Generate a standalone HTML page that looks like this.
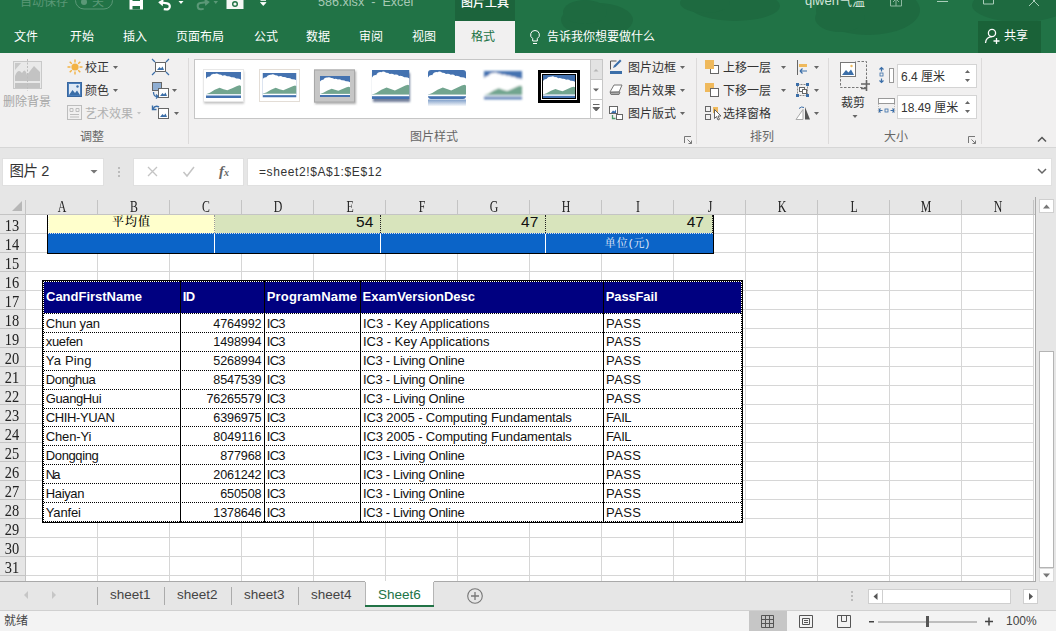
<!DOCTYPE html>
<html lang="zh-CN">
<head>
<meta charset="utf-8">
<title>586.xlsx - Excel</title>
<style>
*{box-sizing:border-box;margin:0;padding:0}
html,body{width:1056px;height:631px;overflow:hidden;background:#fff}
body{position:relative;font-family:"Liberation Sans","Noto Sans CJK SC",sans-serif;font-size:12px;color:#444}
.abs{position:absolute}
#title{left:0;top:0;width:1056px;height:53px;background:#217346}
.tt{position:absolute;color:#fff;white-space:nowrap}
.tab{position:absolute;top:28.5px;font-size:12px;color:#fff;white-space:nowrap;line-height:16px}
#ribbon{left:0;top:53px;width:1056px;height:95px;background:#f1f0f0;border-bottom:1px solid #d6d6d6}
.rl{position:absolute;font-size:12px;color:#333;white-space:nowrap;line-height:14px}
.gl{position:absolute;font-size:12px;color:#666;white-space:nowrap;line-height:14px}
.sep{position:absolute;top:58px;width:1px;height:84px;background:#dcdcdc}
#fbar{left:0;top:148px;width:1056px;height:49px;background:#e6e6e6}
.box{position:absolute;background:#fff;border:1px solid #e0e0e0}
#grid{left:0;top:197px;width:1036px;height:385px;background:#fff;overflow:hidden;border-right:1px solid #a9a9a9;border-bottom:1px solid #a9a9a9}
#colhdr{left:0;top:0;width:1040px;height:18px;background:#e6e6e6;border-bottom:1px solid #c4c4c4}
.ch{position:absolute;top:1px;font-family:"Liberation Serif","Noto Serif CJK SC",serif;font-size:16px;line-height:17px;color:#222;width:72px;text-align:center;transform:scaleX(0.74)}
.rh{position:absolute;left:0;width:26px;height:19px;background:#e6e6e6;border-bottom:1px solid #c4c4c4;border-right:1px solid #c4c4c4;font-family:"Liberation Serif","Noto Serif CJK SC",serif;font-size:16px;line-height:21px;color:#222;text-align:center}
.rh span{display:inline-block;transform:scaleX(0.9);margin-left:-1px}
#tabs{left:0;top:582px;width:1056px;height:28px;background:#e6e6e6}
#status{left:0;top:610px;width:1056px;height:21px;background:#f3f3f3;border-top:1px solid #d0d0d0}
.td{font-size:13px;line-height:16px;color:#111;white-space:nowrap}
.tn{font-size:12.600px}
.th{font-weight:bold;font-size:13px;line-height:16px;color:#fff;white-space:nowrap}
.p1n{top:-2.300px;text-align:right;font-size:15.500px;color:#111;line-height:18px;font-family:"Liberation Sans",sans-serif}
.st{top:3.500px;font-size:13.500px;line-height:18px;color:#444;white-space:nowrap}
</style>
</head>
<body>
<div id="title" class="abs">
<svg class="abs" style="left:0;top:0" width="1056" height="53" viewBox="0 0 1056 53">
<g fill="#1e6a40">
<ellipse cx="597" cy="20" rx="36" ry="17"/><ellipse cx="585" cy="12" rx="22" ry="12"/>
<ellipse cx="735" cy="6" rx="45" ry="15"/><ellipse cx="705" cy="3" rx="25" ry="10"/>
<ellipse cx="868" cy="10" rx="52" ry="25"/><ellipse cx="840" cy="18" rx="25" ry="14"/>
<ellipse cx="1020" cy="5" rx="48" ry="17"/>
</g>
<rect x="455" y="0" width="60" height="22" fill="#1c643c"/>
<rect x="455" y="21" width="60" height="32" fill="#f1f0f0"/>
<rect x="978" y="21" width="63" height="32" fill="#1a6238"/>
<!-- autosave toggle -->
<rect x="75.500" y="-8" width="37" height="17" rx="8.500" fill="none" stroke="#5b9877" stroke-width="1"/>
<circle cx="84" cy="2" r="3" fill="#5b9877"/>
<!-- save -->
<rect x="129.500" y="-5" width="13.500" height="14.500" fill="#fff"/>
<rect x="132.500" y="6" width="7.500" height="3.500" fill="#217346"/>
<rect x="132.500" y="-5" width="7.500" height="6" fill="#217346"/><rect x="133.500" y="-5" width="5.500" height="5" fill="#fff"/>
<!-- undo -->
<path d="M159.500 3 h7.500 a3 3 0 0 1 0 6.200 h-2.500" fill="none" stroke="#fff" stroke-width="2.200" transform="rotate(8 165 4)"/>
<path d="M158 3.200 l5 -4.200 v7.500z" fill="#fff" transform="rotate(8 165 4)"/>
<path d="M178.500 1h5l-2.500 3z" fill="#fff"/>
<!-- redo faint -->
<path d="M208 3 h-7.500 a3 3 0 0 0 0 6.200 h2.500" fill="none" stroke="#5b9877" stroke-width="2" transform="rotate(-8 201 4)"/>
<path d="M210 3.200 l-5 -4.200 v7.500z" fill="#5b9877" transform="rotate(-8 201 4)"/>
<path d="M213.500 1h4.500l-2.250 3z" fill="#5b9877"/>
<!-- camera -->
<rect x="226.500" y="-6" width="17" height="15" fill="#f4f8f5"/>
<circle cx="235" cy="4" r="3" fill="#217346"/><circle cx="235" cy="4" r="1.600" fill="#f4f8f5"/>
<path d="M260.500 0.500h5.500 M260.500 2.500h5.500l-2.750 3z" fill="#fff" stroke="#fff" stroke-width="0.800"/>
<!-- window controls -->
<path d="M890.500 -4h11v10h-11z M896 6v-7 M893 2l3-3l3 3" fill="none" stroke="#8db8a0" stroke-width="1"/>
<path d="M937 1.500h11" stroke="#a9cdb9" stroke-width="1"/>
<path d="M983.500 -6h10v10h-10z" fill="none" stroke="#a9cdb9" stroke-width="1"/>
<path d="M1029 -4l10 10 M1039 -4l-10 10" stroke="#a9cdb9" stroke-width="1"/>
<!-- bulb -->
<path d="M535 30.500a4.300 4.300 0 0 1 2.300 8 v2.500h-4.600v-2.500a4.300 4.300 0 0 1 2.300 -8z M533 43.500h4" fill="none" stroke="#fff" stroke-width="1"/>
<!-- share person -->
<circle cx="992" cy="33" r="3.600" fill="none" stroke="#fff" stroke-width="1.300"/>
<path d="M985.500 43q0.500 -6 6.500 -6.300 M996.500 38v6 M993.500 41h6" fill="none" stroke="#fff" stroke-width="1.300"/>
</svg>
<div class="tt" style="left:20px;top:-6px;font-size:12px;line-height:16px;color:#5b9877">自动保存</div>
<div class="tt" style="left:92px;top:-6px;font-size:12px;line-height:16px;color:#5b9877">关</div>
<div class="tt" style="left:318px;top:-6.500px;font-size:12.600px;line-height:16px;color:#a7c9b5">586.xlsx&nbsp; -&nbsp; Excel</div>
<div class="tt" style="left:461px;top:-5px;font-size:12px;font-weight:500;line-height:16px;color:#fff">图片工具</div>
<div class="tt" style="left:805px;top:-7px;font-size:13px;line-height:16px;color:#cfe3d7">qiwen气温</div>
<div class="tab" style="left:14px">文件</div>
<div class="tab" style="left:70px">开始</div>
<div class="tab" style="left:123px">插入</div>
<div class="tab" style="left:176px">页面布局</div>
<div class="tab" style="left:254px">公式</div>
<div class="tab" style="left:306px">数据</div>
<div class="tab" style="left:359px">审阅</div>
<div class="tab" style="left:412px">视图</div>
<div class="tab" style="left:471px;color:#217346">格式</div>
<div class="tab" style="left:547px">告诉我你想要做什么</div>
<div class="tab" style="left:1004px;top:27.500px">共享</div>
</div>
<div id="ribbon" class="abs">
<svg class="abs" style="left:0;top:0" width="1056" height="95" viewBox="0 53 1056 95">
<defs>
<filter id="sh" x="-20%" y="-20%" width="140%" height="150%"><feGaussianBlur stdDeviation="1"/></filter>
<filter id="soft" x="-10%" y="-10%" width="120%" height="120%"><feGaussianBlur stdDeviation="0.800"/></filter>
<linearGradient id="refl" x1="0" y1="0" x2="0" y2="1"><stop offset="0" stop-color="#4472b0" stop-opacity="0.700"/><stop offset="1" stop-color="#4472b0" stop-opacity="0"/></linearGradient>
</defs>
<!-- separators -->
<g fill="#dcdada"><rect x="188" y="58" width="1" height="86"/><rect x="696" y="58" width="1" height="86"/><rect x="828" y="58" width="1" height="86"/><rect x="981" y="58" width="1" height="86"/></g>
<!-- gallery -->
<rect x="194.500" y="59.500" width="408" height="59" fill="#fff" stroke="#c6c6c6"/>
<rect x="590" y="60" width="12" height="20" fill="#e3e3e3"/>
<path d="M590.500 60v58 M590 79.500h12 M590 99.500h12" stroke="#c6c6c6" fill="none"/>
<path d="M593.500 71.500l2.500-2.500l2.500 2.500z" fill="#b5b5b5"/>
<path d="M593 88.500h6l-3 3z" fill="#666"/>
<path d="M593 104.500h6.500 M593 107.500h6.500l-3.250 3.500z" fill="#666" stroke="#666" stroke-width="1"/>
<!--TH--><rect x="204" y="71.500" width="40" height="32" fill="#888" opacity="0.550" filter="url(#sh)"/><rect x="203.500" y="69.500" width="40" height="32" fill="#fff" stroke="#e8e8e8"/><svg x="206" y="72" width="35" height="26" viewBox="0 0 36 27" preserveAspectRatio="none"><rect width="36" height="27" fill="#4472b0"/><path d="M0 7 Q1.500 4.500 4 4.800 Q5.500 1.500 9 2 Q11 0.800 13.500 2.500 Q15.500 2.300 17 3.800 Q19.500 2.800 21.500 4.500 Q24 3.800 26 5.500 Q29 5 31 6.800 Q34 6.500 36 8 V23 H0z" fill="#fff"/><path d="M0 23 L4 21.500 L9 18.500 L14 16.300 L18 17.800 L22 19 L27 16.800 L32 14.500 L34.500 13.800 L36 14.500 V23z" fill="#72a58f"/><rect y="23" width="36" height="1.400" fill="#fff"/></svg><rect x="259.500" y="69.500" width="40" height="32" fill="#fff" stroke="#e3ddd6"/><svg x="262.5" y="73" width="34" height="24.5" viewBox="0 0 36 27" preserveAspectRatio="none"><rect width="36" height="27" fill="#4472b0"/><path d="M0 7 Q1.500 4.500 4 4.800 Q5.500 1.500 9 2 Q11 0.800 13.500 2.500 Q15.500 2.300 17 3.800 Q19.500 2.800 21.500 4.500 Q24 3.800 26 5.500 Q29 5 31 6.800 Q34 6.500 36 8 V23 H0z" fill="#fff"/><path d="M0 23 L4 21.500 L9 18.500 L14 16.300 L18 17.800 L22 19 L27 16.800 L32 14.500 L34.500 13.800 L36 14.500 V23z" fill="#72a58f"/><rect y="23" width="36" height="1.400" fill="#fff"/></svg><rect x="315" y="71" width="41" height="33" fill="#777" opacity="0.600" filter="url(#sh)"/><rect x="314" y="69.500" width="41" height="33" fill="#c6c6c6"/><rect x="314.500" y="70" width="40" height="32" fill="none" stroke="#a8a8a8"/><svg x="320" y="76" width="30" height="21" viewBox="0 0 36 27" preserveAspectRatio="none"><rect width="36" height="27" fill="#4472b0"/><path d="M0 7 Q1.500 4.500 4 4.800 Q5.500 1.500 9 2 Q11 0.800 13.500 2.500 Q15.500 2.300 17 3.800 Q19.500 2.800 21.500 4.500 Q24 3.800 26 5.500 Q29 5 31 6.800 Q34 6.500 36 8 V23 H0z" fill="#fff"/><path d="M0 23 L4 21.500 L9 18.500 L14 16.300 L18 17.800 L22 19 L27 16.800 L32 14.500 L34.500 13.800 L36 14.500 V23z" fill="#72a58f"/><rect y="23" width="36" height="1.400" fill="#fff"/></svg><rect x="373" y="73" width="37" height="29" fill="#44557a" opacity="0.750" filter="url(#sh)"/><svg x="372" y="70" width="37.5" height="29" viewBox="0 0 36 27" preserveAspectRatio="none"><rect width="36" height="27" fill="#4472b0"/><path d="M0 7 Q1.500 4.500 4 4.800 Q5.500 1.500 9 2 Q11 0.800 13.500 2.500 Q15.500 2.300 17 3.800 Q19.500 2.800 21.500 4.500 Q24 3.800 26 5.500 Q29 5 31 6.800 Q34 6.500 36 8 V23 H0z" fill="#fff"/><path d="M0 23 L4 21.500 L9 18.500 L14 16.300 L18 17.800 L22 19 L27 16.800 L32 14.500 L34.500 13.800 L36 14.500 V23z" fill="#72a58f"/><rect y="23" width="36" height="1.400" fill="#fff"/></svg><rect x="428" y="99.500" width="38" height="7" fill="url(#refl)"/><clipPath id="rc"><rect x="428" y="70" width="38" height="29" rx="3"/></clipPath><g clip-path="url(#rc)"><svg x="428" y="70" width="38" height="29" viewBox="0 0 36 27" preserveAspectRatio="none"><rect width="36" height="27" fill="#4472b0"/><path d="M0 7 Q1.500 4.500 4 4.800 Q5.500 1.500 9 2 Q11 0.800 13.500 2.500 Q15.500 2.300 17 3.800 Q19.500 2.800 21.500 4.500 Q24 3.800 26 5.500 Q29 5 31 6.800 Q34 6.500 36 8 V23 H0z" fill="#fff"/><path d="M0 23 L4 21.500 L9 18.500 L14 16.300 L18 17.800 L22 19 L27 16.800 L32 14.500 L34.500 13.800 L36 14.500 V23z" fill="#72a58f"/><rect y="23" width="36" height="1.400" fill="#fff"/></svg></g><g filter="url(#soft)"><svg x="484" y="71" width="38" height="28.5" viewBox="0 0 36 27" preserveAspectRatio="none"><rect width="36" height="27" fill="#4472b0"/><path d="M0 7 Q1.500 4.500 4 4.800 Q5.500 1.500 9 2 Q11 0.800 13.500 2.500 Q15.500 2.300 17 3.800 Q19.500 2.800 21.500 4.500 Q24 3.800 26 5.500 Q29 5 31 6.800 Q34 6.500 36 8 V23 H0z" fill="#fff"/><path d="M0 23 L4 21.500 L9 18.500 L14 16.300 L18 17.800 L22 19 L27 16.800 L32 14.500 L34.500 13.800 L36 14.500 V23z" fill="#72a58f"/><rect y="23" width="36" height="1.400" fill="#fff"/></svg></g><rect x="538" y="70" width="42" height="33" fill="#000"/><rect x="541.500" y="73.500" width="35" height="26" fill="none" stroke="#fff"/><svg x="543" y="75" width="32" height="23" viewBox="0 0 36 27" preserveAspectRatio="none"><rect width="36" height="27" fill="#4472b0"/><path d="M0 7 Q1.500 4.500 4 4.800 Q5.500 1.500 9 2 Q11 0.800 13.500 2.500 Q15.500 2.300 17 3.800 Q19.500 2.800 21.500 4.500 Q24 3.800 26 5.500 Q29 5 31 6.800 Q34 6.500 36 8 V23 H0z" fill="#fff"/><path d="M0 23 L4 21.500 L9 18.500 L14 16.300 L18 17.800 L22 19 L27 16.800 L32 14.500 L34.500 13.800 L36 14.500 V23z" fill="#72a58f"/><rect y="23" width="36" height="1.400" fill="#fff"/></svg><!--/TH-->
<!-- group 1 icons -->
<g id="rmbg"><rect x="13.500" y="61.500" width="28" height="27" fill="#e9e9e9" stroke="#c9c9c9"/><path d="M15 76 q3 -8 7 -3 q3 -6 5 2 l3 -4 l4 -5 l6 6 V81 H15z" fill="#c3c3c3"/><rect x="15" y="83" width="25" height="5" fill="#c3c3c3"/><path d="M27.500 59v32" stroke="#bdbdbd" stroke-dasharray="2 1.500"/><path d="M15 63h6l-6 7z" fill="#c9c9c9"/></g>
<g id="sun"><circle cx="75" cy="67" r="3.600" fill="#f3b344"/><g stroke="#f3b344" stroke-width="1.400"><path d="M75 59.500v3 M75 71.500v3 M67.500 67h3 M79.500 67h3 M69.700 61.700l2.100 2.100 M78.200 70.200l2.100 2.100 M69.700 72.300l2.100-2.100 M78.200 63.800l2.100-2.100"/></g></g>
<g id="color"><rect x="67.500" y="82.500" width="14" height="14" fill="#4a7ebb" stroke="#39679f"/><rect x="69" y="84" width="11" height="11" fill="#dfe9f5"/><path d="M69 95l3.500-5l2.500 3l2-2.500l3 4.500z" fill="#3b6ea8"/><circle cx="77.500" cy="86.500" r="1.200" fill="#3b6ea8"/></g>
<g id="art" fill="none" stroke="#bdbdbd"><rect x="67.500" y="105.500" width="14" height="14"/><path d="M70 108.500h3v3h-3z M76 108.500h3v3h-3z M70 114.500h9 M70 117h9" /></g>
<g id="compress"><rect x="155.500" y="62.500" width="10" height="9" fill="#fff" stroke="#666"/><path d="M157 70l2.500-3l1.500 1.500l1.500-2l1.500 3.500z" fill="#3b6ea8"/><g stroke="#3b6ea8" stroke-width="1.200" fill="none"><path d="M152 59l3 3 M169 59l-3 3 M152 75l3-3 M169 75l-3-3"/></g></g>
<g id="change"><rect x="152.500" y="82.500" width="9" height="8" fill="#8faed3" stroke="#666"/><rect x="158.500" y="88.500" width="10" height="9" fill="#fff" stroke="#666"/><path d="M160 96l2.500-3l1.500 1.500l1.500-2l1.500 3.500z" fill="#3b6ea8"/><path d="M153.500 92q0 5 4 4.500 M156 94.500l2 2l-2 2" fill="none" stroke="#3b6ea8" stroke-width="1.300"/><path d="M172 89h5l-2.500 3z" fill="#666"/></g>
<g id="reset"><rect x="158.500" y="108.500" width="10" height="10" fill="#fff" stroke="#666"/><path d="M160 117l2.500-3l1.500 1.500l1.500-2l1.500 3.500z" fill="#3b6ea8"/><path d="M153 109q2 -4 6 -2 M152.500 105.500v4h4" fill="none" stroke="#3b6ea8" stroke-width="1.400"/><path d="M174 112h5l-2.500 3z" fill="#666"/></g>
<g fill="#666"><path d="M113 66h5l-2.500 3z"/><path d="M113 89h5l-2.500 3z"/></g><path d="M137 112h4l-2 2.500z" fill="#c3c3c3"/>
<!-- group 3 icons -->
<g id="pborder"><path d="M610.500 69.500v-8.500h6" fill="none" stroke="#555"/><rect x="610" y="71" width="12" height="3" fill="#3b6ea8"/><path d="M613 68l1-2.500l6-6l1.500 1.500l-6 6z" fill="#3b6ea8"/></g>
<g id="peffect"><path d="M610 92l4-7h8l-3 7z" fill="#fff" stroke="#777" stroke-linejoin="round"/><path d="M610 92.500l1 2h8l1-2.500z" fill="#aaa" stroke="#777" stroke-linejoin="round"/></g>
<g id="playout"><rect x="609.500" y="106.500" width="8" height="7" fill="#fff" stroke="#666"/><path d="M611 113l2-2.500l1.500 1l1.500-2v3.500z" fill="#3b6ea8"/><rect x="616.500" y="114.500" width="6" height="5" fill="#fff" stroke="#666"/><path d="M612.500 115v3.500h3" fill="none" stroke="#4c9a6a" stroke-width="1.300"/></g>
<g fill="#666"><path d="M680 66h5l-2.500 3z"/><path d="M680 89h5l-2.500 3z"/><path d="M680 112h5l-2.500 3z"/></g>
<g id="dlg1" fill="none" stroke="#777"><path d="M684.500 143v-6.500h6.500"/><path d="M687.500 139.500l4 4 M691.500 140.500v3h-3" /></g>
<!-- group 4 icons -->
<g id="fwd"><rect x="710.500" y="65.500" width="8" height="8" fill="#fff" stroke="#666"/><rect x="705" y="60" width="9" height="9" fill="#efb95c"/></g>
<g id="bwd"><rect x="705" y="83" width="9" height="9" fill="#efb95c"/><rect x="710.500" y="88.500" width="8" height="8" fill="#fff" stroke="#666"/></g>
<g id="selpane"><g fill="none" stroke="#666"><rect x="705.500" y="106.500" width="5" height="5"/><rect x="705.500" y="114.500" width="5" height="5"/></g><rect x="713" y="107" width="5" height="6" fill="#efb95c"/><path d="M714.500 109.500v9l2-2l1.500 3.500l1.500-0.700l-1.500-3.300h3z" fill="#fff" stroke="#555" stroke-width="0.900"/></g>
<g fill="#666"><path d="M781 66h5l-2.500 3z"/><path d="M781 89h5l-2.500 3z"/></g>
<g id="align"><path d="M797.500 60v15" stroke="#666"/><rect x="799" y="64" width="8" height="3" fill="#efb95c"/><path d="M800 71h7 M800 71l2.500-2.500 M800 71l2.500 2.500" stroke="#3b6ea8" stroke-width="1.200" fill="none"/></g>
<g id="group"><rect x="797.500" y="84.500" width="10" height="11" fill="none" stroke="#888" stroke-dasharray="2 1"/><rect x="799.500" y="87.500" width="5" height="4" fill="#fff" stroke="#666"/><rect x="802.500" y="89.500" width="4" height="4" fill="#fff" stroke="#666"/><g fill="#3b6ea8"><rect x="796" y="83" width="3" height="3"/><rect x="806" y="83" width="3" height="3"/><rect x="796" y="94" width="3" height="3"/><rect x="806" y="94" width="3" height="3"/></g></g>
<g id="rotate"><path d="M796 119.500l7-10v10z" fill="#fff" stroke="#aaa"/><path d="M805 107v12.500h5z" fill="#555"/><path d="M799 108.500q2.500-2.500 5-1" fill="none" stroke="#3b6ea8"/></g>
<g fill="#666"><path d="M814 66h5l-2.500 3z"/><path d="M814 89h5l-2.500 3z"/><path d="M814 112h5l-2.500 3z"/></g>
<!-- group 5 -->
<g id="crop"><path d="M840.500 75v12.500h25.500 M866.500 87v-25.500h-11" fill="none" stroke="#777" stroke-dasharray="2.500 1.500"/><rect x="840.500" y="62.500" width="15" height="14" fill="#fff" stroke="#777"/><path d="M842 75l4-5l2.500 2.500l2.500-3l3 5.500z" fill="#3b6ea8"/><circle cx="851.500" cy="66" r="1.200" fill="#efb95c"/><path d="M861 84h9 M866.500 80v11 M861 88.500h6" stroke="#666" stroke-width="1.600" fill="none"/></g>
<path d="M852.500 115h5l-2.500 3z" fill="#666"/>
<g id="hicon"><rect x="889.500" y="68.500" width="4" height="14" fill="#fff" stroke="#999"/><g stroke="#3b6ea8" stroke-width="1.200" fill="none"><path d="M881.500 67.500v4 M879.500 69.500l2-2l2 2 M881.500 82.500v-4 M879.500 80.500l2 2l2-2"/></g><rect x="880" y="73" width="3" height="3" fill="none" stroke="#3b6ea8" stroke-width="0.800"/></g>
<g id="wicon"><rect x="878.500" y="98.500" width="16" height="5" fill="#fff" stroke="#999"/><g stroke="#3b6ea8" stroke-width="1.200" fill="none"><path d="M878.500 110.500h4 M880.500 108.500l-2 2l2 2 M894.500 110.500h-4 M892.500 108.500l2 2l-2 2"/></g><rect x="885" y="109" width="3" height="3" fill="none" stroke="#3b6ea8" stroke-width="0.800"/><path d="M878.500 104v9 M894.500 104v9" stroke="#bbb" stroke-dasharray="1 1"/></g>
<rect x="897.500" y="64.500" width="79" height="23" fill="#fff" stroke="#d4d4d4"/>
<rect x="897.500" y="95.500" width="79" height="23" fill="#fff" stroke="#d4d4d4"/>
<g fill="#666"><path d="M965 73h5l-2.500-3z"/><path d="M965 79h5l-2.500 3z"/><path d="M965 104h5l-2.500-3z"/><path d="M965 110h5l-2.500 3z"/></g>
<g id="dlg2" fill="none" stroke="#777"><path d="M968.500 143v-6.500h6.500"/><path d="M971.500 139.500l4 4 M975.500 140.500v3h-3"/></g>
<path d="M1038 141.500l4-4l4 4" fill="none" stroke="#555" stroke-width="1.500"/>
</svg>
<div class="gl" style="left:3px;top:41.500px;color:#a6a6a6">删除背景</div>
<div class="rl" style="left:85px;top:8px">校正</div>
<div class="rl" style="left:85px;top:31px">颜色</div>
<div class="rl" style="left:85px;top:54px;color:#b0b0b0">艺术效果</div>
<div class="gl" style="left:80px;top:77px">调整</div>
<div class="gl" style="left:410px;top:77px">图片样式</div>
<div class="rl" style="left:628px;top:8px">图片边框</div>
<div class="rl" style="left:628px;top:31px">图片效果</div>
<div class="rl" style="left:628px;top:54px">图片版式</div>
<div class="rl" style="left:723px;top:8px">上移一层</div>
<div class="rl" style="left:723px;top:31px">下移一层</div>
<div class="rl" style="left:723px;top:54px">选择窗格</div>
<div class="gl" style="left:750px;top:77px">排列</div>
<div class="rl" style="left:841px;top:43px">裁剪</div>
<div class="rl" style="left:901px;top:17px">6.4 厘米</div>
<div class="rl" style="left:901px;top:48px">18.49 厘米</div>
<div class="gl" style="left:884px;top:77px">大小</div>
</div>
<div id="fbar" class="abs">
<div class="box" style="left:2px;top:10px;width:102px;height:28px"></div>
<div class="box" style="left:133px;top:10px;width:111px;height:28px"></div>
<div class="box" style="left:247px;top:10px;width:805px;height:28px"></div>
<div id="nbox" class="abs" style="left:9.500px;top:13.500px;font-size:14.500px;line-height:18px;color:#333;white-space:nowrap;letter-spacing:-0.400px">图片 2</div>
<div id="ftxt" class="abs" style="left:259px;top:16px;font-size:12px;line-height:16px;color:#333;white-space:nowrap;letter-spacing:0.600px">=sheet2!$A$1:$E$12</div>
<svg class="abs" style="left:0;top:0" width="1056" height="49" viewBox="0 148 1056 49">
<path d="M90.500 170h7l-3.500 3.500z" fill="#777"/>
<g fill="#bbb"><rect x="118" y="167" width="2" height="2"/><rect x="118" y="171" width="2" height="2"/><rect x="118" y="175" width="2" height="2"/></g>
<path d="M148 167l9 9 M157 167l-9 9" stroke="#c4c4c4" stroke-width="1.300" fill="none"/>
<path d="M183.500 172l3.500 4l7-9" stroke="#c4c4c4" stroke-width="1.500" fill="none"/>
<path d="M1038 169l4 4l4-4" stroke="#666" stroke-width="1.500" fill="none"/>
</svg>
<div class="abs" style="left:219px;top:14px;font-family:'Liberation Serif',serif;font-style:italic;font-weight:bold;font-size:15px;line-height:18px;color:#666;white-space:nowrap">f<span style="font-size:10px">x</span></div>
</div>
<!--GRID-->
<div id="grid" class="abs">
<svg class="abs" style="left:0;top:0" width="1040" height="385"><rect x="25" y="18" width="1" height="368" fill="#d6d6d6"/><rect x="97" y="18" width="1" height="368" fill="#d6d6d6"/><rect x="169" y="18" width="1" height="368" fill="#d6d6d6"/><rect x="241" y="18" width="1" height="368" fill="#d6d6d6"/><rect x="313" y="18" width="1" height="368" fill="#d6d6d6"/><rect x="385" y="18" width="1" height="368" fill="#d6d6d6"/><rect x="457" y="18" width="1" height="368" fill="#d6d6d6"/><rect x="529" y="18" width="1" height="368" fill="#d6d6d6"/><rect x="601" y="18" width="1" height="368" fill="#d6d6d6"/><rect x="673" y="18" width="1" height="368" fill="#d6d6d6"/><rect x="745" y="18" width="1" height="368" fill="#d6d6d6"/><rect x="817" y="18" width="1" height="368" fill="#d6d6d6"/><rect x="889" y="18" width="1" height="368" fill="#d6d6d6"/><rect x="961" y="18" width="1" height="368" fill="#d6d6d6"/><rect x="1033" y="18" width="1" height="368" fill="#d6d6d6"/><rect x="26" y="36" width="1008" height="1" fill="#d6d6d6"/><rect x="26" y="55" width="1008" height="1" fill="#d6d6d6"/><rect x="26" y="74" width="1008" height="1" fill="#d6d6d6"/><rect x="26" y="93" width="1008" height="1" fill="#d6d6d6"/><rect x="26" y="112" width="1008" height="1" fill="#d6d6d6"/><rect x="26" y="131" width="1008" height="1" fill="#d6d6d6"/><rect x="26" y="150" width="1008" height="1" fill="#d6d6d6"/><rect x="26" y="169" width="1008" height="1" fill="#d6d6d6"/><rect x="26" y="188" width="1008" height="1" fill="#d6d6d6"/><rect x="26" y="207" width="1008" height="1" fill="#d6d6d6"/><rect x="26" y="226" width="1008" height="1" fill="#d6d6d6"/><rect x="26" y="245" width="1008" height="1" fill="#d6d6d6"/><rect x="26" y="264" width="1008" height="1" fill="#d6d6d6"/><rect x="26" y="283" width="1008" height="1" fill="#d6d6d6"/><rect x="26" y="302" width="1008" height="1" fill="#d6d6d6"/><rect x="26" y="321" width="1008" height="1" fill="#d6d6d6"/><rect x="26" y="340" width="1008" height="1" fill="#d6d6d6"/><rect x="26" y="359" width="1008" height="1" fill="#d6d6d6"/><rect x="26" y="378" width="1008" height="1" fill="#d6d6d6"/><rect x="26" y="397" width="1008" height="1" fill="#d6d6d6"/><rect x="26" y="416" width="1008" height="1" fill="#d6d6d6"/></svg>
<div id="colhdr" class="abs"><div class="ch" style="left:26px">A</div><div class="abs" style="left:97px;top:3px;width:1px;height:15px;background:#c4c4c4"></div><div class="ch" style="left:98px">B</div><div class="abs" style="left:169px;top:3px;width:1px;height:15px;background:#c4c4c4"></div><div class="ch" style="left:170px">C</div><div class="abs" style="left:241px;top:3px;width:1px;height:15px;background:#c4c4c4"></div><div class="ch" style="left:242px">D</div><div class="abs" style="left:313px;top:3px;width:1px;height:15px;background:#c4c4c4"></div><div class="ch" style="left:314px">E</div><div class="abs" style="left:385px;top:3px;width:1px;height:15px;background:#c4c4c4"></div><div class="ch" style="left:386px">F</div><div class="abs" style="left:457px;top:3px;width:1px;height:15px;background:#c4c4c4"></div><div class="ch" style="left:458px">G</div><div class="abs" style="left:529px;top:3px;width:1px;height:15px;background:#c4c4c4"></div><div class="ch" style="left:530px">H</div><div class="abs" style="left:601px;top:3px;width:1px;height:15px;background:#c4c4c4"></div><div class="ch" style="left:602px">I</div><div class="abs" style="left:673px;top:3px;width:1px;height:15px;background:#c4c4c4"></div><div class="ch" style="left:674px">J</div><div class="abs" style="left:745px;top:3px;width:1px;height:15px;background:#c4c4c4"></div><div class="ch" style="left:746px">K</div><div class="abs" style="left:817px;top:3px;width:1px;height:15px;background:#c4c4c4"></div><div class="ch" style="left:818px">L</div><div class="abs" style="left:889px;top:3px;width:1px;height:15px;background:#c4c4c4"></div><div class="ch" style="left:890px">M</div><div class="abs" style="left:961px;top:3px;width:1px;height:15px;background:#c4c4c4"></div><div class="ch" style="left:962px">N</div><div class="abs" style="left:1033px;top:3px;width:1px;height:15px;background:#c4c4c4"></div><div class="abs" style="left:25px;top:3px;width:1px;height:15px;background:#c4c4c4"></div><svg class="abs" style="left:11px;top:4px" width="12" height="11"><path d="M11 0V10H1z" fill="#b7b7b7"/></svg></div>
<div class="rh" style="top:18px"><span>13</span></div><div class="rh" style="top:37px"><span>14</span></div><div class="rh" style="top:56px"><span>15</span></div><div class="rh" style="top:75px"><span>16</span></div><div class="rh" style="top:94px"><span>17</span></div><div class="rh" style="top:113px"><span>18</span></div><div class="rh" style="top:132px"><span>19</span></div><div class="rh" style="top:151px"><span>20</span></div><div class="rh" style="top:170px"><span>21</span></div><div class="rh" style="top:189px"><span>22</span></div><div class="rh" style="top:208px"><span>23</span></div><div class="rh" style="top:227px"><span>24</span></div><div class="rh" style="top:246px"><span>25</span></div><div class="rh" style="top:265px"><span>26</span></div><div class="rh" style="top:284px"><span>27</span></div><div class="rh" style="top:303px"><span>28</span></div><div class="rh" style="top:322px"><span>29</span></div><div class="rh" style="top:341px"><span>30</span></div><div class="rh" style="top:360px"><span>31</span></div><div class="rh" style="top:379px"><span>32</span></div>
<div id="pic1" class="abs" style="left:47px;top:18px;width:667px;height:39px;border-left:1px solid #000;border-right:1px solid #000;border-bottom:1px solid #000">
<div class="abs" style="left:0;top:0;width:167px;height:18px;background:#ffffcc"></div>
<div class="abs" style="left:167px;top:0;width:498px;height:18px;background:#d8e4bc"></div>
<div class="abs" style="left:0;top:18px;width:665px;height:20px;background:#0b64c8;border-top:1px dotted #dde"></div>
<div class="abs" style="left:0;top:0;width:1px;height:18px;border-left:1px dotted #fff"></div>
<div class="abs" style="left:166px;top:0;width:1px;height:18px;border-left:1px dotted #999"></div>
<div class="abs" style="left:332px;top:0;width:1px;height:18px;border-left:1px dotted #222"></div>
<div class="abs" style="left:497px;top:0;width:1px;height:18px;border-left:1px dotted #222"></div>
<div class="abs" style="left:166px;top:19px;width:1px;height:19px;background:#fff"></div>
<div class="abs" style="left:332px;top:19px;width:1px;height:19px;background:#fff"></div>
<div class="abs" style="left:497px;top:19px;width:1px;height:19px;background:#fff"></div>
<div class="abs" style="left:0;width:167px;top:-0.700px;text-align:center;font-size:12px;color:#000;line-height:16px;letter-spacing:1px;font-weight:500;font-family:'Liberation Serif','Noto Serif CJK SC',serif">平均值</div>
<div class="abs p1n" style="left:167px;width:158.300px">54</div>
<div class="abs p1n" style="left:333px;width:157.300px">47</div>
<div class="abs p1n" style="left:498px;width:158px">47</div>
<div class="abs" style="left:664px;top:0;width:1px;height:18px;border-left:1px dotted #222"></div>
<div class="abs" style="left:496px;width:167px;top:21px;text-align:center;font-size:11px;color:#e6eefa;line-height:14px;letter-spacing:1px;font-family:'Liberation Sans','Noto Serif CJK SC',serif">单位(元)</div>
</div>
<div id="pic2" class="abs" style="left:42px;top:83px;width:701px;height:243px;background:#fff;border:1px solid #000;font-family:'Liberation Sans',sans-serif">
<div class="abs" style="left:0;top:0;width:699px;height:241px;border:1px dotted #000"></div>
<div class="abs" style="left:1px;top:1px;width:697px;height:31px;background:#000080"></div>
<div class="abs th" style="left:3px;top:8px;letter-spacing:-0.007px">CandFirstName</div><div class="abs th" style="left:139.8px;top:8px;letter-spacing:-0.700px">ID</div><div class="abs th" style="left:223.8px;top:8px;letter-spacing:0.142px">ProgramName</div><div class="abs th" style="left:319.6px;top:8px;letter-spacing:-0.024px">ExamVersionDesc</div><div class="abs th" style="left:562.8px;top:8px;letter-spacing:-0.152px">PassFail</div>
<div class="abs" style="left:1px;top:32px;width:697px;height:1px;border-top:1px dotted #000"></div><div class="abs td" style="left:2.799999999999997px;top:34.5px;letter-spacing:-0.222px">Chun yan</div><div class="abs td tn" style="left:138px;width:80.5px;top:34.5px;text-align:right;letter-spacing:-0.122px">4764992</div><div class="abs td" style="left:223.8px;top:34.5px;letter-spacing:-0.767px">IC3</div><div class="abs td" style="left:320px;top:34.5px;letter-spacing:-0.033px">IC3 - Key Applications</div><div class="abs td" style="left:563px;top:34.5px;letter-spacing:0.427px">PASS</div>
<div class="abs" style="left:1px;top:51px;width:697px;height:1px;border-top:1px dotted #000"></div><div class="abs td" style="left:2.799999999999997px;top:53.4px;letter-spacing:-0.369px">xuefen</div><div class="abs td tn" style="left:138px;width:80.5px;top:53.4px;text-align:right;letter-spacing:-0.122px">1498994</div><div class="abs td" style="left:223.8px;top:53.4px;letter-spacing:-0.767px">IC3</div><div class="abs td" style="left:320px;top:53.4px;letter-spacing:-0.033px">IC3 - Key Applications</div><div class="abs td" style="left:563px;top:53.4px;letter-spacing:0.427px">PASS</div>
<div class="abs" style="left:1px;top:70px;width:697px;height:1px;border-top:1px dotted #000"></div><div class="abs td" style="left:2.799999999999997px;top:72.3px;letter-spacing:0.187px">Ya Ping</div><div class="abs td tn" style="left:138px;width:80.5px;top:72.3px;text-align:right;letter-spacing:-0.122px">5268994</div><div class="abs td" style="left:223.8px;top:72.3px;letter-spacing:-0.767px">IC3</div><div class="abs td" style="left:320px;top:72.3px;letter-spacing:-0.292px">IC3 - Living Online</div><div class="abs td" style="left:563px;top:72.3px;letter-spacing:0.427px">PASS</div>
<div class="abs" style="left:1px;top:89px;width:697px;height:1px;border-top:1px dotted #000"></div><div class="abs td" style="left:2.799999999999997px;top:91.2px;letter-spacing:-0.464px">Donghua</div><div class="abs td tn" style="left:138px;width:80.5px;top:91.2px;text-align:right;letter-spacing:-0.122px">8547539</div><div class="abs td" style="left:223.8px;top:91.2px;letter-spacing:-0.767px">IC3</div><div class="abs td" style="left:320px;top:91.2px;letter-spacing:-0.292px">IC3 - Living Online</div><div class="abs td" style="left:563px;top:91.2px;letter-spacing:0.427px">PASS</div>
<div class="abs" style="left:1px;top:108px;width:697px;height:1px;border-top:1px dotted #000"></div><div class="abs td" style="left:2.799999999999997px;top:110.1px;letter-spacing:-0.392px">GuangHui</div><div class="abs td tn" style="left:138px;width:80.5px;top:110.1px;text-align:right;letter-spacing:-0.121px">76265579</div><div class="abs td" style="left:223.8px;top:110.1px;letter-spacing:-0.767px">IC3</div><div class="abs td" style="left:320px;top:110.1px;letter-spacing:-0.292px">IC3 - Living Online</div><div class="abs td" style="left:563px;top:110.1px;letter-spacing:0.427px">PASS</div>
<div class="abs" style="left:1px;top:127px;width:697px;height:1px;border-top:1px dotted #000"></div><div class="abs td" style="left:2.799999999999997px;top:129.1px;letter-spacing:-0.404px">CHIH-YUAN</div><div class="abs td tn" style="left:138px;width:80.5px;top:129.1px;text-align:right;letter-spacing:-0.122px">6396975</div><div class="abs td" style="left:223.8px;top:129.1px;letter-spacing:-0.767px">IC3</div><div class="abs td" style="left:320px;top:129.1px;letter-spacing:-0.137px">IC3 2005 - Computing Fundamentals</div><div class="abs td" style="left:563px;top:129.1px;letter-spacing:-0.383px">FAIL</div>
<div class="abs" style="left:1px;top:145px;width:697px;height:1px;border-top:1px dotted #000"></div><div class="abs td" style="left:2.799999999999997px;top:148.0px;letter-spacing:-0.164px">Chen-Yi</div><div class="abs td tn" style="left:138px;width:80.5px;top:148.0px;text-align:right;letter-spacing:0.034px">8049116</div><div class="abs td" style="left:223.8px;top:148.0px;letter-spacing:-0.767px">IC3</div><div class="abs td" style="left:320px;top:148.0px;letter-spacing:-0.137px">IC3 2005 - Computing Fundamentals</div><div class="abs td" style="left:563px;top:148.0px;letter-spacing:-0.383px">FAIL</div>
<div class="abs" style="left:1px;top:164px;width:697px;height:1px;border-top:1px dotted #000"></div><div class="abs td" style="left:2.799999999999997px;top:166.9px;letter-spacing:-0.394px">Dongqing</div><div class="abs td tn" style="left:138px;width:80.5px;top:166.9px;text-align:right;letter-spacing:-0.126px">877968</div><div class="abs td" style="left:223.8px;top:166.9px;letter-spacing:-0.767px">IC3</div><div class="abs td" style="left:320px;top:166.9px;letter-spacing:-0.292px">IC3 - Living Online</div><div class="abs td" style="left:563px;top:166.9px;letter-spacing:0.427px">PASS</div>
<div class="abs" style="left:1px;top:183px;width:697px;height:1px;border-top:1px dotted #000"></div><div class="abs td" style="left:2.799999999999997px;top:185.8px;letter-spacing:-2.025px">Na</div><div class="abs td tn" style="left:138px;width:80.5px;top:185.8px;text-align:right;letter-spacing:-0.122px">2061242</div><div class="abs td" style="left:223.8px;top:185.8px;letter-spacing:-0.767px">IC3</div><div class="abs td" style="left:320px;top:185.8px;letter-spacing:-0.292px">IC3 - Living Online</div><div class="abs td" style="left:563px;top:185.8px;letter-spacing:0.427px">PASS</div>
<div class="abs" style="left:1px;top:202px;width:697px;height:1px;border-top:1px dotted #000"></div><div class="abs td" style="left:2.799999999999997px;top:204.7px;letter-spacing:-0.374px">Haiyan</div><div class="abs td tn" style="left:138px;width:80.5px;top:204.7px;text-align:right;letter-spacing:-0.126px">650508</div><div class="abs td" style="left:223.8px;top:204.7px;letter-spacing:-0.767px">IC3</div><div class="abs td" style="left:320px;top:204.7px;letter-spacing:-0.292px">IC3 - Living Online</div><div class="abs td" style="left:563px;top:204.7px;letter-spacing:0.427px">PASS</div>
<div class="abs" style="left:1px;top:221px;width:697px;height:1px;border-top:1px dotted #000"></div><div class="abs td" style="left:2.799999999999997px;top:223.6px;letter-spacing:-0.141px">Yanfei</div><div class="abs td tn" style="left:138px;width:80.5px;top:223.6px;text-align:right;letter-spacing:-0.122px">1378646</div><div class="abs td" style="left:223.8px;top:223.6px;letter-spacing:-0.767px">IC3</div><div class="abs td" style="left:320px;top:223.6px;letter-spacing:-0.292px">IC3 - Living Online</div><div class="abs td" style="left:563px;top:223.6px;letter-spacing:0.427px">PASS</div>
<div class="abs" style="left:137px;top:0;width:1px;height:241px;background:#000"></div><div class="abs" style="left:221px;top:0;width:1px;height:241px;background:#000"></div><div class="abs" style="left:317px;top:0;width:1px;height:241px;background:#000"></div><div class="abs" style="left:560px;top:0;width:1px;height:241px;background:#000"></div></div>
</div>
<!--/GRID-->
<div id="vscroll" class="abs" style="left:1036px;top:197px;width:20px;height:385px;background:#e6e6e6">
<div class="abs" style="left:3px;top:2px;width:15px;height:14px;background:#fff;border:1px solid #cfcfcf"></div>
<svg class="abs" style="left:7px;top:7px" width="8" height="5"><path d="M0 4.500h7l-3.500-4z" fill="#777"/></svg>
<div class="abs" style="left:3px;top:154px;width:15px;height:217px;background:#fff;border:1px solid #b4b4b4"></div>
<div class="abs" style="left:3px;top:371px;width:15px;height:14px;background:#fdfdfd;border:1px solid #dadada"></div>
<svg class="abs" style="left:7px;top:376px" width="8" height="5"><path d="M0 0.500h7l-3.500 4z" fill="#777"/></svg>
</div>
<div id="tabs" class="abs">
<svg class="abs" style="left:0;top:0;overflow:visible" width="1056" height="28" viewBox="0 582 1056 28">
<path d="M28 591l-4 4l4 4z M52 591l4 4l-4 4z" fill="#c6c6c6"/>
<g fill="#ababab"><rect x="97" y="587" width="1" height="18"/><rect x="164" y="587" width="1" height="18"/><rect x="231" y="587" width="1" height="18"/><rect x="298" y="587" width="1" height="18"/></g>
<rect x="365" y="581" width="69" height="25" fill="#fff"/><rect x="365" y="582" width="1" height="23" fill="#b5b5b5"/><rect x="433" y="582" width="1" height="23" fill="#b5b5b5"/><rect x="365" y="605" width="69" height="2" fill="#217346"/>
<circle cx="475" cy="596" r="7.300" fill="none" stroke="#777" stroke-width="1.100"/><path d="M471 596h8 M475 592v8" stroke="#777" stroke-width="1.300"/>
<g fill="#bbb"><rect x="851" y="591" width="2" height="2"/><rect x="851" y="595" width="2" height="2"/><rect x="851" y="599" width="2" height="2"/></g>
<rect x="868.500" y="589.500" width="14" height="14" fill="#fff" stroke="#cfcfcf"/><path d="M877.500 593v7l-4-3.500z" fill="#555"/>
<rect x="882.500" y="589.500" width="128" height="14" fill="#fff" stroke="#cfcfcf"/>
<rect x="1023.500" y="589.500" width="14" height="14" fill="#fff" stroke="#cfcfcf"/><path d="M1029 593v7l4-3.500z" fill="#555"/>
</svg>
<div class="abs st" style="left:110px">sheet1</div>
<div class="abs st" style="left:177px">sheet2</div>
<div class="abs st" style="left:244px">sheet3</div>
<div class="abs st" style="left:311px">sheet4</div>
<div class="abs st" style="left:378px;color:#217346">Sheet6</div>
</div>
<div id="status" class="abs">
<div class="abs" style="left:4px;top:1.500px;font-size:12px;line-height:16px;color:#444">就绪</div>
<svg class="abs" style="left:0;top:-1px" width="1056" height="22" viewBox="0 609 1056 22">
<rect x="749" y="610" width="38" height="21" fill="#c6c6c6"/>
<g fill="none" stroke="#555"><path d="M761.500 614.500h12v12h-12z M765.500 614.500v12 M769.500 614.500v12 M761.500 618.500h12 M761.500 622.500h12"/>
<path d="M799.500 614.500h13v12h-13z M802.500 617.500h7v6h-7z M804 619.500h4 M804 621.500h4"/>
<path d="M837.500 614.500h13v12h-13z M841.500 614.500v6h5v-6"/></g>
<rect x="869" y="620" width="5" height="1.500" fill="#444"/>
<rect x="878" y="620.500" width="99" height="1" fill="#8a8a8a"/>
<rect x="926" y="615" width="3" height="11" fill="#555"/>
<path d="M985 620.500h8 M989 616.500v8" stroke="#444" stroke-width="1.500"/>
</svg>
<div class="abs" style="left:1006px;top:2px;font-size:12px;line-height:16px;color:#444">100%</div>
</div>
</body>
</html>
